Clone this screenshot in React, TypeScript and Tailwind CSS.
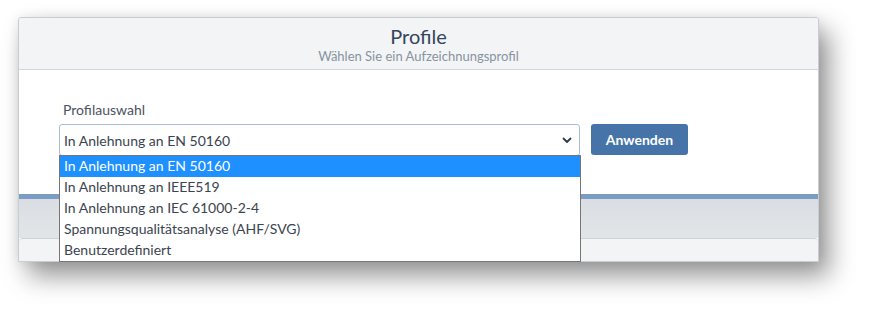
import React from "react";

const font = { fontFamily: '"Source Sans Pro", Lato, "Noto Sans", sans-serif' };

export default function App() {
  const items = [
    "In Anlehnung an EN 50160",
    "In Anlehnung an IEEE519",
    "In Anlehnung an IEC 61000-2-4",
    "Spannungsqualitätsanalyse (AHF/SVG)",
    "Benutzerdefiniert",
  ];
  return (
    <div className="w-[869px] h-[310px] bg-white overflow-hidden pt-[17px] pl-[18px]" style={font}>
      <div className="relative w-[801px] h-[245px] border border-[#c9cdd1] rounded-t-[3px] bg-white shadow-[10px_14px_26px_rgba(0,0,0,0.42),0_0_12px_rgba(0,0,0,0.08)] flex flex-col">
        <div className="h-[52px] bg-[#f3f4f6] border-b border-[#d3d8dd] flex flex-col items-center rounded-t-[3px]">
          <div className="text-[20px] leading-[24px] mt-[6px] text-[#34465a]">Profile</div>
          <div className="text-[13px] leading-[16px] text-[#8793a0]">Wählen Sie ein Aufzeichnungsprofil</div>
        </div>
        <div className="h-[124px] bg-white pl-[40px] pt-[31px]">
          <div className="text-[14px] leading-[18px] text-[#4a5360] pl-[4px]">Profilauswahl</div>
          <div className="flex items-start gap-[11px] mt-[5px]">
            <div className="w-[521px] h-[32px] border border-[#a9bdd6] rounded-[3px] flex items-center justify-between pl-[4px] pr-[7px] text-[14px] text-[#3b4450]">
              <span>In Anlehnung an EN 50160</span>
              <svg width="10" height="7" viewBox="0 0 10 7" className="mt-[1px]">
                <path d="M1.5 1.5 L5 5 L8.5 1.5" fill="none" stroke="#2d3b4c" strokeWidth="1.8" strokeLinecap="round" strokeLinejoin="round" />
              </svg>
            </div>
            <button className="w-[97px] h-[31px] bg-[#4674a8] rounded-[3px] text-white text-[14px] font-bold">Anwenden</button>
          </div>
        </div>
        <div className="h-[5px] bg-[#7b9cc5]" />
        <div className="h-[39px] bg-gradient-to-b from-[#dadee2] to-[#e2e5e8]" />
        <div className="flex-1 bg-[#f3f4f6] border-t border-[#cfd3d7] rounded-tl-[4px] rounded-tr-[4px]" />
        <div className="absolute left-[40px] top-[137px] w-[522px] border border-[#767676] bg-white text-[14px] text-[#3b4450]">
          {items.map((t, i) => (
            <div key={t} className={`h-[21px] leading-[20px] pl-[4px] ${i === 0 ? "bg-[#1e90ff] text-white" : ""}`}>{t}</div>
          ))}
        </div>
      </div>
    </div>
  );
}
